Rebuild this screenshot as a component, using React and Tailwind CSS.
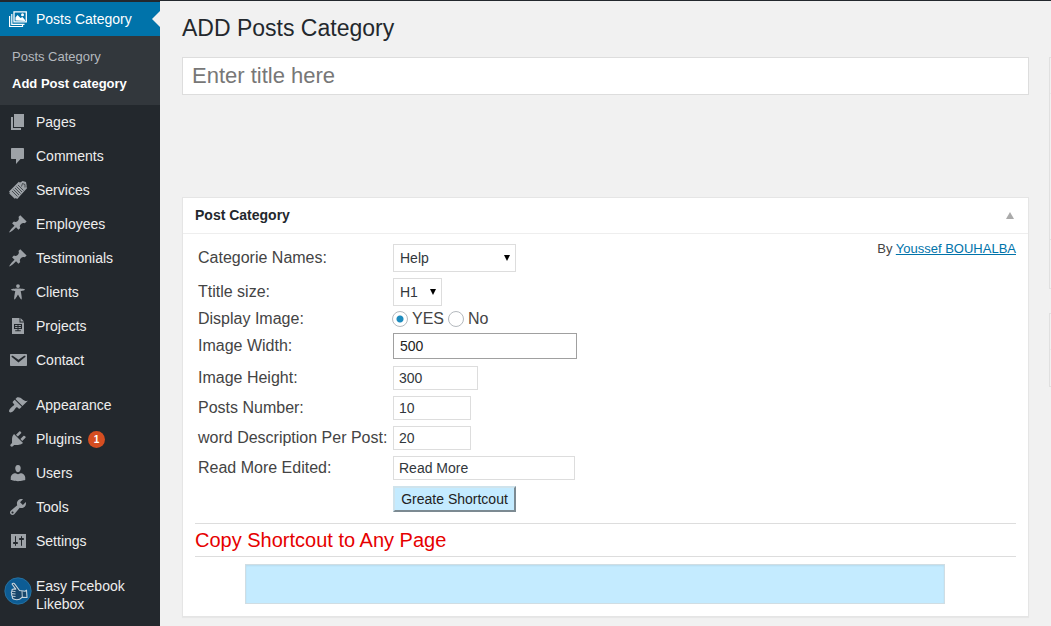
import React from "react";

const ICONS = {
  pages: "M6 15V2h10v13H6zm-1 1h8v2H3V5h2v11z",
  comments: "M4 2h11c.6 0 1 .4 1 1v9c0 .6-.4 1-1 1h-2.500L8 18v-5H4c-.6 0-1-.4-1-1V3c0-.6.4-1 1-1z",
  pin: "M10.44 3.02l1.82-1.82 6.36 6.35-1.83 1.82c-1.05-.68-2.48-.57-3.41.36l-.75.75c-.92.93-1.04 2.35-.35 3.41l-1.83 1.82-2.41-2.41-2.8 2.79c-.42.42-3.38 2.71-3.8 2.29s1.86-3.39 2.28-3.81l2.79-2.79L4.1 9.36l1.83-1.82c1.05.69 2.48.57 3.4-.36l.75-.75c.93-.92 1.05-2.35.36-3.41z",
  person:
    "M10 2.200a1.900 1.900 0 1 1 0 3.800 1.900 1.900 0 0 1 0-3.800zM3 7.400c0-.9 7-1 7-1s7 .1 7 1c0 1-4.300 1.600-4.300 1.600s1.700 8 .9 8.400c-.9.4-3.600-4.900-3.600-4.900s-2.700 5.300-3.600 4.900C5.600 17 7.300 9 7.300 9S3 8.400 3 7.400z",
  document:
    "M4 2h7.500v4.500H16V18H4zM12.500 2L16 5.500h-3.500zM6 8v5h3.500v1.200H7.200v1.100h5.600v-1.100h-2.300V13H14V8zM7.100 9.100h2.400v1H7.100zm3.400 0h2.400v1h-2.400zM7.100 11h2.400v1H7.100zm3.400 0h2.400v1h-2.400z",
  mail: "M2.500 4h15.500c.6 0 1 .4 1 1v10c0 .6-.4 1-1 1H3c-.6 0-1-.4-1-1V5c0-.6.2-1 .5-1zm7.990 8.600l6.740-5.530c.24-.2.430-.660.130-1.070-.29-.410-.820-.420-1.170-.170l-5.700 3.860L4.800 5.830c-.350-.250-.880-.240-1.170.170-.300.410-.110.870.130 1.070z",
  brush:
    "M14.48 11.06L7.41 3.99l1.500-1.500c.5-.56 2.300-.47 3.510.32 1.210.8 1.430 1.280 2.910 2.100 1.180.64 2.450 1.260 4.450.85zm-.71.71L6.700 4.700 4.930 6.470c-.39.39-.39 1.020 0 1.410l1.060 1.060c.39.39.39 1.030 0 1.420-.6.6-1.430 1.110-2.210 1.690-.35.26-.7.53-1.010.84C1.430 14.230.4 16.080 1.400 17.070c.99 1 2.840-.03 4.180-1.360.31-.31.58-.66.85-1.020.57-.78 1.080-1.610 1.690-2.210.39-.39 1.020-.39 1.410 0l1.060 1.060c.39.39 1.020.39 1.410 0z",
  plug: "M13.11 4.36L9.87 7.6 8 5.73l3.24-3.24c.35-.34 1.05-.2 1.56.32.52.51.66 1.21.31 1.55zm-8 1.77l.91-1.12 9.01 9.01-1.19.84c-.71.71-2.63 1.16-3.82 1.16H6.14L4.9 17.26c-.59.59-1.54.59-2.12 0-.59-.58-.59-1.53 0-2.12l1.24-1.24v-3.88c0-1.13.4-3.19 1.09-3.89zm7.26 3.97l3.24-3.24c.34-.35 1.04-.21 1.55.31.52.51.66 1.21.31 1.55l-3.24 3.25z",
  user: "M10 9.250c-2.270 0-2.730-3.440-2.730-3.440C7 4.020 7.820 2 9.970 2c2.160 0 2.980 2.020 2.710 3.810 0 0-.41 3.440-2.680 3.440zm-2.500.9L10 11.200l2.500-1.050c2.600 0 4.740 2.150 4.740 4.350v2.520s-3.650 1.130-7.240 1.130c-3.650 0-7.240-1.130-7.240-1.130V14.500c0-2.250 2.140-4.350 4.740-4.350z",
  wrench:
    "M16.68 9.77c-1.34 1.34-3.3 1.67-4.95.99l-5.41 6.52c-.99.99-2.59.99-3.58 0s-.99-2.59 0-3.57l6.52-5.42c-.68-1.65-.35-3.61.99-4.95 1.28-1.28 3.12-1.62 4.72-1.06l-2.89 2.89 2.82 2.82 2.86-2.87c.53 1.58.18 3.39-1.08 4.65zM3.81 16.21c.4.39 1.04.39 1.43 0 .4-.4.4-1.04 0-1.43-.39-.4-1.03-.4-1.43 0-.39.39-.39 1.03 0 1.43z",
  sliders:
    "M18 17V3H3v14zM8 11h1c.55 0 1 .45 1 1s-.45 1-1 1H8v1.500c0 .28-.22.5-.5.5s-.5-.22-.5-.5V13H6c-.55 0-1-.45-1-1s.45-1 1-1h1V5.500c0-.28.22-.5.5-.5s.5.22.5.5V11zm5-2h-1c-.55 0-1-.45-1-1s.45-1 1-1h1V5.500c0-.28.22-.5.5-.5s.5.22.5.5V7h1c.55 0 1 .45 1 1s-.45 1-1 1h-1v5.500c0 .28-.22.5-.5.5s-.5-.22-.5-.5V9z",
};

function Glyph({ name }) {
  return (
    <svg viewBox="0 0 20 20" className="size-5 shrink-0 fill-[#9da2a7]" fillRule="evenodd" aria-hidden="true">
      <path d={ICONS[name]} />
    </svg>
  );
}

function TicketGlyph() {
  return (
    <svg viewBox="0 0 20 20" className="size-5 shrink-0" aria-hidden="true">
      <path
        fill="#9da2a7"
        d="M1 11.500L10.800 1.700c.8 1 1.700.8 2.300.2l1.400-.9 3.500 1 .7 4c-.3.800-.3 1.400.5 2L9.200 19c-.8-.9-1.700-1-2.500-.3L1.300 13.500c.6-.7.600-1.400-.3-2z"
      />
      <path
        stroke="#23282d"
        strokeWidth=".7"
        fill="none"
        d="M4 11l5.500 5.500M5.500 9.500L11 15M7 8l5.500 5.500M8.500 6.500L14 12M10 5l5.500 5.500M13.500 6.500l1-3 2.500 1v3"
      />
    </svg>
  );
}

function GalleryGlyph() {
  return (
    <svg viewBox="0 0 20 20" className="size-5 shrink-0" fill="none" stroke="#fff" aria-hidden="true">
      <path d="M6 2.800h12.300v10H6z" strokeWidth="1.300" />
      <path d="M3.800 5v10.300h12.700M1.600 7v10.500h12.900v-1.700" strokeWidth="1.200" />
      <path d="M7.500 11.500V8.500L9.500 6l3 3 2-1 2.500 3v1z" fill="#fff" stroke="none" />
      <circle cx="14.500" cy="5.800" r="1.500" fill="#fff" stroke="none" />
    </svg>
  );
}

function ThumbBadge() {
  return (
    <svg viewBox="0 0 28 28" className="size-7 shrink-0" aria-hidden="true">
      <circle cx="14" cy="14" r="13.200" fill="#0d5c94" stroke="#2b78a8" strokeWidth=".8" />
      <path
        d="M8 7c1-1.200 2.200-.8 2.800.2l4.700 6.300 5.500.7 1.500-1 .5 7.300-5-.2c-2 2.200-5.500 3-8.500 1.700-1.500-.6-1.300-2-1-2.700-1.200-.6-1-2-.5-2.600-1-.8-.8-2 .1-2.500-.6-1.200.2-2.200 1.400-2.200l2.300.1z"
        fill="#17466b"
        stroke="#c9d6df"
        strokeWidth="1.100"
        strokeLinejoin="round"
      />
      <path d="M8.100 14.200l3.400.4M8 16.700l3.500.3M8.500 19.300l3 .2M18 14.200l.3 6" stroke="#c9d6df" strokeWidth=".9" fill="none" />
    </svg>
  );
}

function MenuItem({ icon, glyph, label, badge }) {
  return (
    <a href="#" className="flex h-[34px] items-center gap-2 pl-2 text-[14px] text-[#eee]">
      {glyph || <Glyph name={icon} />}
      <span>{label}</span>
      {badge && (
        <span className="-ml-0.5 flex size-[17px] items-center justify-center rounded-full bg-[#d54e21] text-[10px] font-bold text-white">
          {badge}
        </span>
      )}
    </a>
  );
}

function Sidebar() {
  return (
    <nav className="w-40 shrink-0 bg-[#23282d] pt-0.5" aria-label="Admin menu">
      <a href="#" className="relative flex h-[34px] items-center gap-2 bg-[#0073aa] pl-2 text-[14px] text-white">
        <GalleryGlyph />
        Posts Category
        <span className="absolute right-0 top-1/2 -translate-y-1/2 border-y-8 border-r-8 border-y-transparent border-r-[#f1f1f1]" />
      </a>
      <div className="bg-[#32373c] px-3 pb-2 pt-[7px] text-[13px] leading-[27px]">
        <a href="#" className="block text-[#b4b9be]">Posts Category</a>
        <a href="#" className="block font-bold text-white">Add Post category</a>
      </div>
      <div>
        <MenuItem icon="pages" label="Pages" />
        <MenuItem icon="comments" label="Comments" />
        <MenuItem glyph={<TicketGlyph />} label="Services" />
        <MenuItem icon="pin" label="Employees" />
        <MenuItem icon="pin" label="Testimonials" />
        <MenuItem icon="person" label="Clients" />
        <MenuItem icon="document" label="Projects" />
        <MenuItem icon="mail" label="Contact" />
      </div>
      <div className="mt-[11px]">
        <MenuItem icon="brush" label="Appearance" />
        <MenuItem icon="plug" label="Plugins" badge="1" />
        <MenuItem icon="user" label="Users" />
        <MenuItem icon="wrench" label="Tools" />
        <MenuItem icon="sliders" label="Settings" />
      </div>
      <a href="#" className="mt-[11px] flex gap-1 py-2 pl-1 text-[14px] leading-[18px] text-[#eee]">
        <ThumbBadge />
        <span>Easy Fcebook Likebox</span>
      </a>
    </nav>
  );
}

function Row({ id, label, height, children }) {
  return (
    <div className={`flex items-center ${height}`}>
      <label htmlFor={id} className="w-[195px] shrink-0 text-[16px]">
        {label}
      </label>
      {children}
    </div>
  );
}

function Select({ id, width, value, options }) {
  return (
    <div className={`relative h-7 ${width}`}>
      <select
        id={id}
        defaultValue={value}
        className="size-full appearance-none border border-[#ddd] bg-white pl-1.5 text-[14px] text-[#32373c] outline-none"
      >
        {options.map((option) => (
          <option key={option}>{option}</option>
        ))}
      </select>
      <svg viewBox="0 0 6 6" className="pointer-events-none absolute right-1.5 top-[11px] size-1.5" aria-hidden="true">
        <path d="M0 0h6L3 6z" />
      </svg>
    </div>
  );
}

function TextField({ id, width, value }) {
  return (
    <input
      id={id}
      type="text"
      defaultValue={value}
      className={`h-6 border border-[#ddd] bg-white px-[5px] text-[14px] text-[#32373c] outline-none ${width}`}
    />
  );
}

const RADIO =
  "size-4 appearance-none rounded-full border border-[#b4b9be] bg-white checked:bg-[radial-gradient(circle,#1e8cbe_3px,#fff_4px)]";

function ShortcodePanel() {
  return (
    <section className="border border-[#e5e5e5] bg-white text-[#444] shadow-[0_1px_1px_rgba(0,0,0,0.04)]">
      <header className="flex h-9 items-center justify-between border-b border-[#eee] px-3">
        <h2 className="text-[14px] font-bold text-[#23282d]">Post Category</h2>
        <button type="button" aria-label="Toggle panel" className="px-0.5">
          <svg viewBox="0 0 8 7" className="h-[7px] w-2 fill-[#aaa]" aria-hidden="true">
            <path d="M4 0l4 7H0z" />
          </svg>
        </button>
      </header>
      <div className="px-3 pb-3 pt-[7px]">
        <div className="flex justify-between">
          <form className="pl-[3px]" onSubmit={(event) => event.preventDefault()}>
            <Row id="category" label="Categorie Names:" height="h-[34px]">
              <Select id="category" width="w-[123px]" value="Help" options={["Help", "News"]} />
            </Row>
            <Row id="size" label="Ttitle size:" height="h-[34px]">
              <Select id="size" width="w-[49px]" value="H1" options={["H1", "H2", "H3"]} />
            </Row>
            <Row id="image-yes" label="Display Image:" height="h-5">
              <span className="-ml-px flex items-center gap-1 text-[16px]">
                <input id="image-yes" type="radio" name="image" defaultChecked className={RADIO} />
                <label htmlFor="image-yes">YES</label>
                <input id="image-no" type="radio" name="image" className={RADIO} />
                <label htmlFor="image-no">No</label>
              </span>
            </Row>
            <Row id="width" label="Image Width:" height="h-[34px]">
              <input
                id="width"
                type="text"
                defaultValue="500"
                className="h-[26px] w-[184px] border border-[#a0a0a0] bg-white px-1.5 text-[14px] text-[#222] outline-none"
              />
            </Row>
            <Row id="height" label="Image Height:" height="h-[30px]">
              <TextField id="height" width="w-[85px]" value="300" />
            </Row>
            <Row id="number" label="Posts Number:" height="h-[30px]">
              <TextField id="number" width="w-[78px]" value="10" />
            </Row>
            <Row id="words" label="word Description Per Post:" height="h-[30px]">
              <TextField id="words" width="w-[78px]" value="20" />
            </Row>
            <Row id="more" label="Read More Edited:" height="h-[30px]">
              <TextField id="more" width="w-[182px]" value="Read More" />
            </Row>
            <div className="flex h-8 items-center pl-[195px]">
              <button
                type="submit"
                className="h-[26px] w-[123px] whitespace-nowrap border-2 border-b-[#7c8a92] border-l-[#cfe3ec] border-r-[#7c8a92] border-t-[#cfe3ec] bg-[#c4ebff] text-[14px] text-[#222]"
              >
                Greate Shortcout
              </button>
            </div>
          </form>
          <p className="text-[13px] leading-[15px]">
            By{" "}
            <a href="#" className="text-[#0073aa] underline">
              Youssef BOUHALBA
            </a>
          </p>
        </div>
        <label
          htmlFor="shortcode"
          className="mt-2 flex h-[34px] items-center border-y border-[#ddd] text-[20px] text-[#e60000]"
        >
          Copy Shortcout to Any Page
        </label>
        <textarea
          id="shortcode"
          readOnly
          className="ml-[50px] mt-[7px] block h-10 w-[calc(100%-121px)] resize-none border border-[#d0dde3] bg-[#c4ebff] shadow-[inset_0_1px_2px_rgba(0,0,0,0.07)] outline-none"
        />
      </div>
    </section>
  );
}

export default function App() {
  return (
    <div className="flex min-h-screen bg-[#f1f1f1] font-['Liberation_Sans',Arial,sans-serif]">
      <Sidebar />
      <div className="flex min-w-0 flex-1 gap-5 border-t border-[#23282d] pl-[22px]">
        <main className="min-w-0 flex-1 pb-2">
          <h1 className="pt-3 text-[23px] leading-[30px] text-[#23282d]">ADD Posts Category</h1>
          <input
            type="text"
            aria-label="Title"
            placeholder="Enter title here"
            className="mb-[102px] mt-3.5 block h-[38px] w-full border border-[#ddd] bg-white px-[9px] text-[22px] text-[#32373c] outline-none placeholder:text-[#777]"
          />
          <ShortcodePanel />
        </main>
        <aside className="flex w-0.5 shrink-0 flex-col gap-6 pt-14">
          <div className="border border-r-0 border-[#e0e0e0]">
            <div className="h-9 border-b border-[#e8e8e8]" />
            <div className="h-[146px] border-b border-[#e0e0e0]" />
            <div className="h-12" />
          </div>
          <div className="border border-r-0 border-[#e0e0e0]">
            <div className="h-9 border-b border-[#e8e8e8]" />
            <div className="h-9" />
          </div>
        </aside>
      </div>
    </div>
  );
}
